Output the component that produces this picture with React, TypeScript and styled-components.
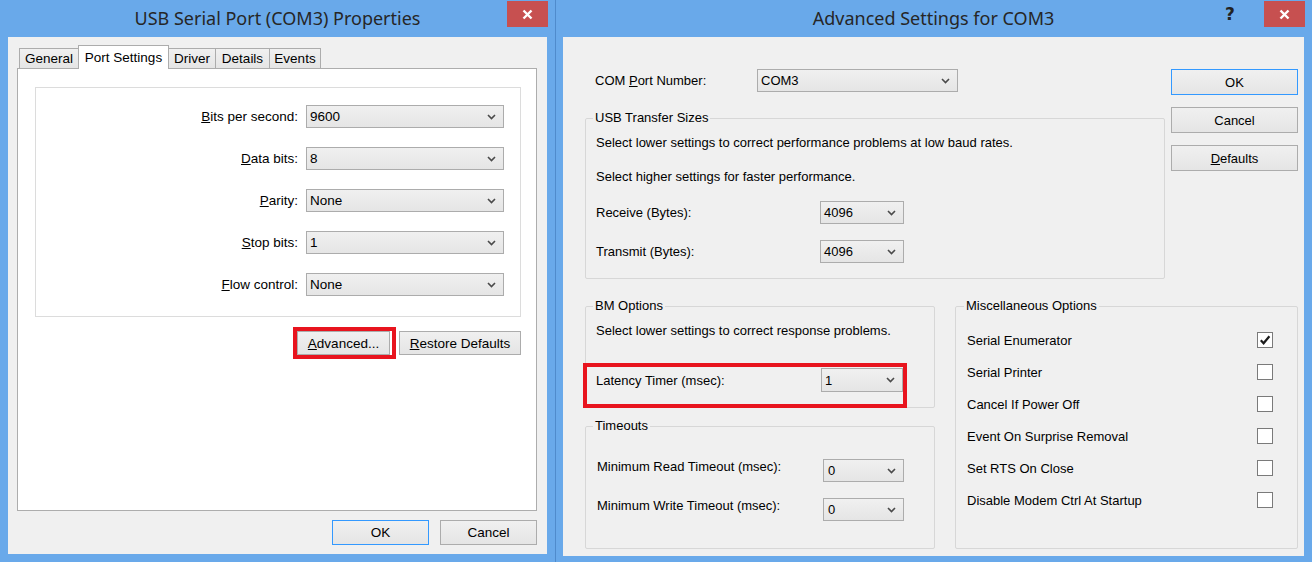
import styled, { createGlobalStyle } from "styled-components"

const GlobalStyle = createGlobalStyle`
  html, body {
    margin: 0;
    padding: 0;
    width: 1312px;
    height: 562px;
    overflow: hidden;
    background: #69a9ea;
  }
  * {
    box-sizing: border-box;
  }
`

const FRAME = "#69a9ea"
const FACE = "#f0f0f0"

function Chevron() {
    return (
        <svg width="9" height="6" viewBox="0 0 9 6">
            <path d="M1 1 L4.5 4.5 L8 1" fill="none" stroke="#4a4a4a" strokeWidth="1.6" />
        </svg>
    )
}

function CloseGlyph() {
    return (
        <svg width="11" height="11" viewBox="0 0 11 11">
            <path d="M1.5 1.5 L9.5 9.5 M9.5 1.5 L1.5 9.5" stroke="#fff" strokeWidth="2.4" />
        </svg>
    )
}

function CheckGlyph() {
    return (
        <svg width="12" height="12" viewBox="0 0 12 12">
            <path d="M1.8 6.3 L4.6 9.3 L10.4 2.2" fill="none" stroke="#1c1c1c" strokeWidth="2.2" />
        </svg>
    )
}

function Select({ value, width, height = 23 }: { value: string; width: number; height?: number }) {
    return (
        <Dropdown $w={width} $h={height}>
            <span>{value}</span>
            <Chevron />
        </Dropdown>
    )
}

const portFields = [
    { key: "B", rest: "its per second:", value: "9600" },
    { key: "D", rest: "ata bits:", value: "8" },
    { key: "P", rest: "arity:", value: "None" },
    { key: "S", rest: "top bits:", value: "1" },
    { key: "F", rest: "low control:", value: "None" },
]

const tabs = [
    { label: "General", w: 60 },
    { label: "Port Settings", w: 91, active: true },
    { label: "Driver", w: 48 },
    { label: "Details", w: 55 },
    { label: "Events", w: 52 },
]

const miscOptions = [
    { label: "Serial Enumerator", checked: true },
    { label: "Serial Printer", checked: false },
    { label: "Cancel If Power Off", checked: false },
    { label: "Event On Surprise Removal", checked: false },
    { label: "Set RTS On Close", checked: false },
    { label: "Disable Modem Ctrl At Startup", checked: false },
]

export default function App() {
    return (
        <>
            <GlobalStyle />
            <Desktop>
                <Window $w={556} $padLeft={8} $padBottom={8} $divider>
                    <TitleBar>
                        <Title>USB Serial Port (COM3) Properties</Title>
                        <Controls>
                            <CloseButton><CloseGlyph /></CloseButton>
                        </Controls>
                    </TitleBar>
                    <PropsClient>
                        <TabStrip>
                            {tabs.map((t) => (
                                <Tab key={t.label} $w={t.w} $active={!!t.active}>{t.label}</Tab>
                            ))}
                        </TabStrip>
                        <TabPanel>
                            <SettingsBox>
                                {portFields.map((f) => (
                                    <FieldRow key={f.rest}>
                                        <FieldLabel><u>{f.key}</u>{f.rest}</FieldLabel>
                                        <Select value={f.value} width={198} />
                                    </FieldRow>
                                ))}
                            </SettingsBox>
                            <ActionRow>
                                <RedMark>
                                    <PushButton $w={93} $h={24}><span><u>A</u>dvanced...</span></PushButton>
                                </RedMark>
                                <PushButton $w={122} $h={24}><span><u>R</u>estore Defaults</span></PushButton>
                            </ActionRow>
                        </TabPanel>
                        <Footer>
                            <PushButton $w={97} $h={25} $default>OK</PushButton>
                            <PushButton $w={97} $h={25}>Cancel</PushButton>
                        </Footer>
                    </PropsClient>
                </Window>

                <Window $w={756} $padLeft={7} $padBottom={6}>
                    <TitleBar>
                        <Title>Advanced Settings for COM3</Title>
                        <Controls>
                            <HelpButton>?</HelpButton>
                            <CloseButton><CloseGlyph /></CloseButton>
                        </Controls>
                    </TitleBar>
                    <AdvClient>
                        <TopArea>
                            <MainColumn>
                                <ComRow>
                                    <span>COM <u>P</u>ort Number:</span>
                                    <Select value="COM3" width={201} />
                                </ComRow>
                                <Group $top={19} $padBottom={15}>
                                    <Legend>USB Transfer Sizes</Legend>
                                    <Note $top={10}>Select lower settings to correct performance problems at low baud rates.</Note>
                                    <Note $top={19}>Select higher settings for faster performance.</Note>
                                    <SizeRow $top={17}>
                                        <span>Receive (Bytes):</span>
                                        <Select value="4096" width={84} />
                                    </SizeRow>
                                    <SizeRow $top={16}>
                                        <span>Transmit (Bytes):</span>
                                        <Select value="4096" width={84} />
                                    </SizeRow>
                                </Group>
                            </MainColumn>
                            <ButtonColumn>
                                <PushButton $w={127} $h={26} $default>OK</PushButton>
                                <PushButton $w={127} $h={26}>Cancel</PushButton>
                                <PushButton $w={127} $h={26}><span><u>D</u>efaults</span></PushButton>
                            </ButtonColumn>
                        </TopArea>
                        <BottomArea>
                            <OptionsColumn>
                                <Group $top={0} $padBottom={0}>
                                    <Legend>BM Options</Legend>
                                    <Note $top={10}>Select lower settings to correct response problems.</Note>
                                    <LatencyMark>
                                        <SizeRow $top={0}>
                                            <span>Latency Timer (msec):</span>
                                            <Select value="1" width={82} height={24} />
                                        </SizeRow>
                                    </LatencyMark>
                                </Group>
                                <Group $top={11} $padBottom={27}>
                                    <Legend>Timeouts</Legend>
                                    <TimeoutRow $top={26}>
                                        <span>Minimum Read Timeout (msec):</span>
                                        <Select value="0" width={81} />
                                    </TimeoutRow>
                                    <TimeoutRow $top={16}>
                                        <span>Minimum Write Timeout (msec):</span>
                                        <Select value="0" width={81} />
                                    </TimeoutRow>
                                </Group>
                            </OptionsColumn>
                            <MiscGroup>
                                <Legend>Miscellaneous Options</Legend>
                                <MiscList>
                                    {miscOptions.map((o) => (
                                        <MiscRow key={o.label}>
                                            <span>{o.label}</span>
                                            <CheckBox>{o.checked && <CheckGlyph />}</CheckBox>
                                        </MiscRow>
                                    ))}
                                </MiscList>
                            </MiscGroup>
                        </BottomArea>
                    </AdvClient>
                </Window>
            </Desktop>
        </>
    )
}


const Desktop = styled.div`
    display: flex;
    width: 1312px;
    height: 562px;
    background: ${FRAME};
`

const Window = styled.section<{ $w: number; $padLeft: number; $padBottom: number; $divider?: boolean }>`
    flex: none;
    width: ${(p) => p.$w}px;
    display: flex;
    flex-direction: column;
    padding: 0 8px ${(p) => p.$padBottom}px ${(p) => p.$padLeft}px;
    background: ${FRAME};
    border-right: ${(p) => (p.$divider ? "1px solid #4f8bcc" : "none")};
`

const TitleBar = styled.header`
    flex: none;
    height: 37px;
    display: grid;
    grid-template-columns: 1fr auto 1fr;
`

const Title = styled.h1`
    grid-column: 2;
    align-self: center;
    margin: 0 0 1px;
    font-family: "Noto Sans", "Open Sans", sans-serif;
    font-weight: 400;
    font-size: 18px;
    color: #262626;
    white-space: nowrap;
`

const Controls = styled.div`
    grid-column: 3;
    justify-self: end;
    display: flex;
    align-items: flex-start;
`

const HelpButton = styled.div`
    width: 26px;
    height: 27px;
    margin-right: 21px;
    display: flex;
    align-items: center;
    justify-content: center;
    font-family: "DejaVu Sans", sans-serif;
    font-weight: 700;
    font-size: 17px;
    color: #222;
`

const CloseButton = styled.div`
    width: 41px;
    height: 26px;
    margin-top: 1px;
    margin-right: -1px;
    background: #c75050;
    display: flex;
    align-items: center;
    justify-content: center;
`

const PropsClient = styled.div`
    flex: 1;
    display: flex;
    flex-direction: column;
    padding: 8px 10px 9px 9px;
    background: ${FACE};
    font-family: "Liberation Sans", Arial, sans-serif;
    font-size: 13.5px;
    color: #000;
`

const TabStrip = styled.div`
    flex: none;
    height: 23px;
    display: flex;
    align-items: flex-end;
    padding-left: 2px;
`

const Tab = styled.div<{ $w: number; $active: boolean }>`
    width: ${(p) => p.$w}px;
    height: ${(p) => (p.$active ? 24 : 20)}px;
    margin-left: -1px;
    margin-bottom: ${(p) => (p.$active ? -1 : 0)}px;
    display: flex;
    align-items: center;
    justify-content: center;
    border: 1px solid #acacac;
    border-bottom: none;
    background: ${(p) => (p.$active ? "#fff" : "linear-gradient(#f0f0f0, #e5e5e5)")};
    white-space: nowrap;
    position: relative;
    z-index: ${(p) => (p.$active ? 2 : 1)};

    &:first-child {
        margin-left: 0;
    }
`

const TabPanel = styled.div`
    flex: 1;
    display: flex;
    flex-direction: column;
    padding: 18px 15px 0 17px;
    background: #fff;
    border: 1px solid #adadad;
`

const SettingsBox = styled.div`
    display: flex;
    flex-direction: column;
    gap: 19px;
    padding: 17px 16px 20px 0;
    border: 1px solid #dcdcdc;
`

const FieldRow = styled.div`
    display: grid;
    grid-template-columns: 1fr 198px;
    gap: 8px;
    align-items: center;
`

const FieldLabel = styled.span`
    text-align: right;
`

const Dropdown = styled.div<{ $w: number; $h: number }>`
    width: ${(p) => p.$w}px;
    height: ${(p) => p.$h}px;
    display: flex;
    align-items: center;
    justify-content: space-between;
    padding: 0 7px 0 3px;
    border: 1px solid #acacac;
    background: linear-gradient(#f0f0f0, #e5e5e5);
    white-space: nowrap;
`

const ActionRow = styled.div`
    margin-top: 10px;
    display: flex;
    justify-content: flex-end;
    align-items: center;
    gap: 3px;
`

const RedMark = styled.div`
    display: flex;
    padding: 0 2px 0 0;
    border: 4px solid #e8141e;
`

const PushButton = styled.button<{ $w: number; $h: number; $default?: boolean }>`
    width: ${(p) => p.$w}px;
    height: ${(p) => p.$h}px;
    padding: 0;
    display: flex;
    align-items: center;
    justify-content: center;
    border: 1px solid ${(p) => (p.$default ? "#3399ff" : "#acacac")};
    background: linear-gradient(#f0f0f0, #e5e5e5);
    font: inherit;
    color: #000;
`

const Footer = styled.div`
    margin-top: 9px;
    display: flex;
    justify-content: flex-end;
    gap: 11px;
`

const AdvClient = styled.div`
    flex: 1;
    display: flex;
    flex-direction: column;
    padding: 32px 6px 0 22px;
    background: ${FACE};
    font-family: "Liberation Sans", Arial, sans-serif;
    font-size: 13px;
    line-height: 15px;
    color: #000;
`

const TopArea = styled.div`
    display: flex;
    gap: 6px;
    align-items: flex-start;
`

const MainColumn = styled.div`
    width: 580px;
    display: flex;
    flex-direction: column;
`

const ComRow = styled.div`
    display: grid;
    grid-template-columns: 162px 201px;
    align-items: center;
    padding-left: 10px;
`

const ButtonColumn = styled.div`
    display: flex;
    flex-direction: column;
    gap: 12px;
`

const Group = styled.fieldset<{ $top: number; $padBottom: number }>`
    margin: ${(p) => p.$top}px 0 0;
    padding: 0 10px ${(p) => p.$padBottom}px;
    min-width: 0;
    display: flex;
    flex-direction: column;
    border: 1px solid #d7d7d7;
    border-radius: 2px;
`

const Legend = styled.legend`
    padding: 0 2px;
    margin-left: -3px;
    line-height: 14px;
`

const Note = styled.p<{ $top: number }>`
    margin: ${(p) => p.$top}px 0 0;
`

const SizeRow = styled.div<{ $top: number }>`
    margin-top: ${(p) => p.$top}px;
    display: grid;
    grid-template-columns: 224px auto;
    align-items: center;
`

const TimeoutRow = styled.div<{ $top: number }>`
    margin-top: ${(p) => p.$top}px;
    display: grid;
    grid-template-columns: 227px auto;
    align-items: start;

    span {
        padding-left: 1px;
    }
`

const BottomArea = styled.div`
    margin-top: 20px;
    display: flex;
    gap: 20px;
`

const OptionsColumn = styled.div`
    width: 350px;
    display: flex;
    flex-direction: column;
`

const LatencyMark = styled.div`
    align-self: flex-start;
    width: 324px;
    margin: 25px 0 -1px -13px;
    padding: 1px 0 12px 9px;
    border: 4px solid #e8141e;

    & > div {
        grid-template-columns: 225px auto;
    }
`

const MiscGroup = styled.fieldset`
    flex: 1;
    margin: 0;
    padding: 0 24px 0 11px;
    min-width: 0;
    border: 1px solid #d7d7d7;
    border-radius: 2px;
`

const MiscList = styled.div`
    margin-top: 11px;
    display: flex;
    flex-direction: column;
`

const MiscRow = styled.div`
    height: 32px;
    display: flex;
    align-items: center;
    justify-content: space-between;
`

const CheckBox = styled.div`
    width: 16px;
    height: 16px;
    display: flex;
    align-items: center;
    justify-content: center;
    border: 1px solid #7a7a7a;
    background: #fff;
`
